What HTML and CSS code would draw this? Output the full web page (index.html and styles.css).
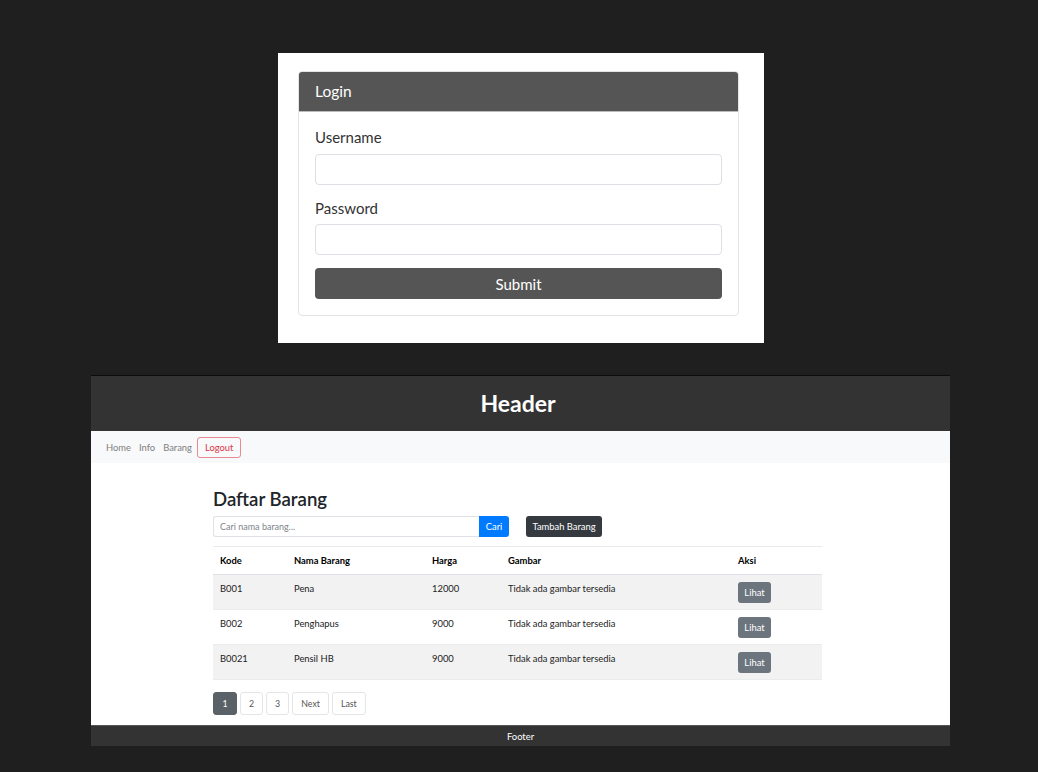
FILE: index.html
```html
<!DOCTYPE html>
<html lang="id">
<head>
    <meta charset="UTF-8">
    <title>Login &amp; Daftar Barang</title>
    <link rel="stylesheet" href="styles.css">
</head>
<body>
    <!-- tangkapan 1: form login -->
    <div class="shot login-shot">
        <div class="card">
            <div class="card-header">Login</div>
            <form class="card-body" action="" method="post" onsubmit="return false">
                <label for="username">Username</label>
                <input type="text" id="username" name="username">
                <label for="password" class="second">Password</label>
                <input type="password" id="password" name="password">
                <button type="submit" class="btn-submit">Submit</button>
            </form>
        </div>
    </div>

    <!-- tangkapan 2: halaman barang -->
    <div class="shot app-shot">
        <div class="header">Header</div>
        <nav class="navbar">
            <a href="#">Home</a>
            <a href="#">Info</a>
            <a href="#">Barang</a>
            <a href="#" class="logout">Logout</a>
        </nav>
        <div class="content">
            <div class="container">
                <h2>Daftar Barang</h2>
                <div class="toolbar">
                    <form class="search" onsubmit="return false">
                        <input type="text" placeholder="Cari nama barang...">
                        <button type="submit">Cari</button>
                    </form>
                    <a href="#" class="btn-dark">Tambah Barang</a>
                </div>
                <table>
                    <thead>
                        <tr>
                            <th class="c-kode">Kode</th>
                            <th class="c-nama">Nama Barang</th>
                            <th class="c-harga">Harga</th>
                            <th class="c-gambar">Gambar</th>
                            <th class="c-aksi">Aksi</th>
                        </tr>
                    </thead>
                    <tbody>
                        <tr>
                            <td>B001</td>
                            <td>Pena</td>
                            <td>12000</td>
                            <td>Tidak ada gambar tersedia</td>
                            <td><a href="#" class="btn-gray">Lihat</a></td>
                        </tr>
                        <tr>
                            <td>B002</td>
                            <td>Penghapus</td>
                            <td>9000</td>
                            <td>Tidak ada gambar tersedia</td>
                            <td><a href="#" class="btn-gray">Lihat</a></td>
                        </tr>
                        <tr>
                            <td>B0021</td>
                            <td>Pensil HB</td>
                            <td>9000</td>
                            <td>Tidak ada gambar tersedia</td>
                            <td><a href="#" class="btn-gray">Lihat</a></td>
                        </tr>
                    </tbody>
                </table>
                <div class="pagination">
                    <a href="#" class="active">1</a>
                    <a href="#">2</a>
                    <a href="#">3</a>
                    <a href="#">Next</a>
                    <a href="#">Last</a>
                </div>
            </div>
        </div>
        <div class="footer">Footer</div>
    </div>
</body>
</html>
```

FILE: styles.css
```css
body{
    margin: 0;
    padding-top: 53px;
    background: #1f1f1f;
    font-family: "Segoe UI", Lato, "Noto Sans", sans-serif;
    color: #212529;
}
a{
    text-decoration: none;
}

/* ---- login ---- */
.login-shot{
    margin-left: 278px;
    width: 486px;
    height: 290px;
    background: #fff;
    padding: 18px 25px 0 20px;
    box-sizing: border-box;
}
.card{
    border: 1px solid #e4e4e4;
    border-radius: 4px;
    overflow: hidden;
}
.card-header{
    background: #555;
    color: #fff;
    height: 40px;
    line-height: 39px;
    padding: 0 16px;
    font-size: 15.5px;
    border-bottom: 1px solid #bbb;
    box-sizing: border-box;
}
.card-body{
    display: flex;
    flex-direction: column;
    padding: 13px 16px 16px;
    margin: 0;
}
.card-body label{
    font-size: 15px;
    line-height: 24px;
    color: #333;
    margin-bottom: 5px;
}
.card-body label.second{
    margin-top: 11px;
    margin-bottom: 4px;
}
.card-body input{
    height: 31px;
    border: 1px solid #dcdfe3;
    border-radius: 4px;
    box-sizing: border-box;
    font-family: inherit;
}
.btn-submit{
    margin-top: 13px;
    height: 31px;
    border: none;
    border-radius: 4px;
    background: #555;
    color: #fff;
    font-size: 15px;
    font-family: inherit;
}

/* ---- halaman barang ---- */
.app-shot{
    margin: 32px 0 0 91px;
    width: 859px;
    border-top: 1px solid #0c0c0c;
}
.header{
    background: #333;
    color: #fff;
    height: 55px;
    line-height: 55px;
    text-align: center;
    font-size: 23px;
    font-weight: bold;
    padding-right: 5px;
}
.navbar{
    background: #f8f9fa;
    height: 32px;
    display: flex;
    align-items: center;
    padding-left: 11px;
    font-size: 9.4px;
}
.navbar a{
    color: #808080;
    padding: 0 4px;
}
.navbar a.logout{
    color: #dc3545;
    border: 1px solid #e98a93;
    border-radius: 3px;
    height: 21px;
    line-height: 20px;
    padding: 0 7px;
    margin-left: 1px;
    box-sizing: border-box;
}
.content{
    background: #fff;
    padding: 25px 0 10px;
}
.container{
    width: 609px;
    margin-left: 122px;
    font-size: 9.4px;
}
h2{
    margin: 0 0 5px;
    font-size: 18.6px;
    font-weight: 600;
    line-height: 23px;
}
.toolbar{
    display: flex;
    gap: 17px;
    height: 21px;
}
.search{
    display: flex;
    margin: 0;
}
.search input{
    width: 266px;
    height: 21px;
    box-sizing: border-box;
    border: 1px solid #dfe3e7;
    border-right: none;
    border-radius: 3px 0 0 3px;
    padding: 0 6px;
    font-size: 9px;
    font-family: inherit;
}
.search input::placeholder{
    color: #808589;
}
.search button{
    width: 30px;
    height: 21px;
    border: none;
    background: #007bff;
    color: #fff;
    border-radius: 0 3px 3px 0;
    font-size: 9.4px;
    font-family: inherit;
}
.btn-dark{
    background: #343a40;
    color: #fff;
    border-radius: 3px;
    width: 76px;
    height: 21px;
    line-height: 21px;
    text-align: center;
    font-size: 9.4px;
}
table{
    margin-top: 9px;
    width: 609px;
    border-collapse: collapse;
    table-layout: fixed;
}
th, td{
    text-align: left;
    vertical-align: top;
    padding: 7px 7px 6px;
    border-top: 1px solid #e9ecef;
    line-height: 14px;
}
th{
    font-weight: bold;
    color: #000;
    border-bottom: 1px solid #dee2e6;
}
td{
    color: #222;
}
tbody tr:nth-child(odd){
    background: #f2f2f2;
}
tbody tr:last-child td{
    border-bottom: 1px solid #e9ecef;
}
.c-kode{ width: 60px; }
.c-nama{ width: 124px; }
.c-harga{ width: 62px; }
.c-gambar{ width: 216px; }
.btn-gray{
    display: inline-block;
    background: #6c757d;
    color: #fff;
    border-radius: 3px;
    width: 33px;
    height: 21px;
    line-height: 21px;
    text-align: center;
    vertical-align: top;
}
.pagination{
    margin-top: 12px;
    display: flex;
    gap: 3px;
}
.pagination a{
    height: 23px;
    line-height: 21px;
    box-sizing: border-box;
    border: 1px solid #e3e6e9;
    border-radius: 3px;
    color: #555;
    padding: 0 8px;
    font-size: 8.8px;
    min-width: 23px;
    text-align: center;
}
.pagination a.active{
    background: #5a6268;
    border-color: #5a6268;
    color: #fff;
    min-width: 24px;
}
.footer{
    background: #333;
    border-top: 1px solid #555;
    color: #fff;
    height: 21px;
    line-height: 21px;
    text-align: center;
    font-size: 9.4px;
    box-sizing: border-box;
}
```
